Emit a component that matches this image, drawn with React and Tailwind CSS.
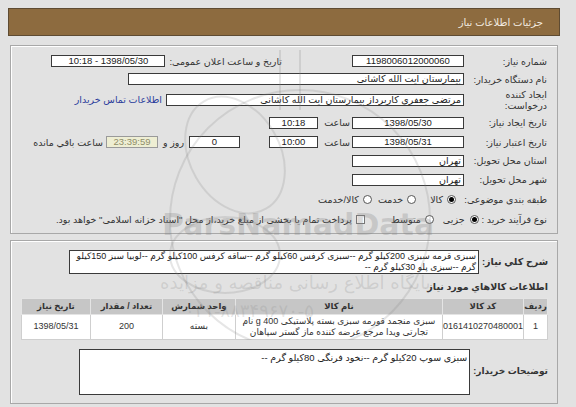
import React from 'react';

const FONT = "font-['Liberation_Sans','DejaVu_Sans',sans-serif]";

function Box({ className = '', children }) {
  return (
    <div className={`flex h-[12px] shrink-0 items-center overflow-hidden whitespace-nowrap border border-[#3a3a3a] bg-white px-[2px] text-[9.5px] leading-none text-[#222] ${className}`}>
      {children}
    </div>
  );
}

function Label({ className = '', children }) {
  return <div className={`shrink-0 whitespace-nowrap text-[9.5px] leading-[11px] text-[#333] ${className}`}>{children}</div>;
}

function Radio({ checked }) {
  return (
    <span className="grid h-[9px] w-[9px] shrink-0 place-items-center rounded-full border border-[#555] bg-white">
      {checked && <span className="h-[5px] w-[5px] rounded-full bg-black" />}
    </span>
  );
}

export default function App() {
  return (
    <div dir="rtl" className={`relative min-h-screen overflow-hidden bg-[#e2e2e2] pl-[8px] pr-[16px] pt-[8px] ${FONT}`}>
      {/* سربرگ */}
      <div className="flex h-[28px] items-center border border-[#5e4b32] bg-[#8d6b3f] pr-[16px] text-[10px] text-[#f3ece0]">
        جزئیات اطلاعات نیاز
      </div>

      {/* پنل اول */}
      <div className="mx-[2px] mt-[9px] border border-[#a8a8a8] pb-[4px] pr-[10px] pt-[6px] shadow-[inset_1px_1px_0_#fff]">
        {/* ردیف ۱ */}
        <div className="flex h-[18px] items-center">
          <Label className="w-[83px]">شماره نیاز:</Label>
          <Box className="w-[112px] justify-center">1198006012000060</Box>
          <Label className="mr-[70px]">تاریخ و ساعت اعلان عمومی:</Label>
          <Box className="mr-[4px] w-[114px] justify-center">1398/05/30 - 10:18</Box>
        </div>
        {/* ردیف ۲ */}
        <div className="flex h-[18px] items-center">
          <Label className="w-[83px]">نام دستگاه خریدار:</Label>
          <Box className="w-[336px]">بیمارستان آیت الله کاشانی</Box>
        </div>
        {/* ردیف ۳ */}
        <div className="flex h-[24px] items-center">
          <Label className="w-[83px]">
            ایجاد کننده
            <br />
            درخواست:
          </Label>
          <Box className="w-[298px]">مرتضی جعفری کاربرداز بیمارستان آیت الله کاشانی</Box>
          <a className="mr-[4px] whitespace-nowrap text-[9.5px] text-[#2c3e9c]">اطلاعات تماس خریدار</a>
        </div>
        {/* ردیف ۴ */}
        <div className="flex h-[21px] items-center">
          <Label className="w-[83px]">تاریخ ایجاد نیاز:</Label>
          <Box className="w-[112px] justify-center">1398/05/30</Box>
          <Label className="mr-[2px] w-[26px]">ساعت</Label>
          <Box className="mr-[6px] w-[49px] justify-center">10:18</Box>
        </div>
        {/* ردیف ۵ */}
        <div className="flex h-[18px] items-center">
          <Label className="w-[83px]">تاریخ اعتبار نیاز:</Label>
          <Box className="w-[112px] justify-center">1398/05/31</Box>
          <Label className="mr-[2px] w-[26px]">ساعت</Label>
          <Box className="mr-[6px] w-[49px] justify-center">10:00</Box>
          <Box className="mr-[29px] w-[51px] justify-center">0</Box>
          <Label className="mr-[5px]">روز و</Label>
          <div className="mr-[5px] flex h-[12px] w-[52px] items-center justify-center border border-[#9a9a9a] bg-[#eeeed3] text-[9.5px] text-[#8e8d68]">
            23:39:59
          </div>
          <Label className="mr-[3px]">ساعت باقي مانده</Label>
        </div>
        {/* ردیف ۶ */}
        <div className="flex h-[19px] items-center">
          <Label className="w-[83px]">استان محل تحویل:</Label>
          <Box className="w-[112px]">تهران</Box>
        </div>
        {/* ردیف ۷ */}
        <div className="flex h-[19px] items-center">
          <Label className="w-[83px]">شهر محل تحویل:</Label>
          <Box className="w-[112px]">تهران</Box>
        </div>
        {/* ردیف ۸ */}
        <div className="flex h-[20px] items-center">
          <Label className="w-[83px]">طبقه بندی موضوعی:</Label>
          <div className="mr-[8px] flex items-center gap-[4px]">
            <Radio checked />
            <Label>کالا</Label>
          </div>
          <div className="mr-[14px] flex items-center gap-[4px]">
            <Radio />
            <Label>خدمت</Label>
          </div>
          <div className="mr-[6px] flex items-center gap-[4px]">
            <Radio />
            <Label>کالا/خدمت</Label>
          </div>
        </div>
        {/* ردیف ۹ */}
        <div className="flex h-[20px] items-center">
          <Label>نوع فرآیند خرید :</Label>
          <div className="mr-[3px] flex items-center gap-[5px]">
            <Radio checked />
            <Label>جزیی</Label>
          </div>
          <div className="mr-[9px] flex items-center gap-[4px]">
            <Radio />
            <Label>متوسط</Label>
          </div>
          <div className="mr-[26px] flex items-center gap-[4px]">
            <span className="h-[9px] w-[9px] shrink-0 border border-[#777] bg-white" />
            <Label>پرداخت تمام یا بخشی از مبلغ خرید،از محل "اسناد خزانه اسلامی" خواهد بود.</Label>
          </div>
        </div>
      </div>

      {/* پنل دوم */}
      <div className="mx-[2px] mt-[6px] border border-[#a8a8a8] pb-[8px] pl-[9px] pr-[9px] pt-[9px] shadow-[inset_1px_1px_0_#fff]">
        <div className="flex items-center gap-[3px]">
          <div className="shrink-0 whitespace-nowrap text-[9.5px] font-bold text-[#333]">شرح کلي نياز:</div>
          <div className="h-[24px] w-[410px] shrink-0 overflow-hidden border border-[#3a3a3a] bg-white px-[2px] text-[9px] leading-[11px] text-[#222]">
            <div className="whitespace-nowrap">سبزی قرمه سبزی 200کیلو گرم --سبزی کرفس 60کیلو گرم --ساقه کرفس 100کیلو گرم --لوبیا سبز 150کیلو</div>
            <div className="whitespace-nowrap">گرم --سبزی پلو 30کیلو گرم --</div>
          </div>
        </div>

        <div className="mt-[6px] whitespace-nowrap text-[9.5px] font-bold leading-[13px] text-[#333]">اطلاعات کالاهاي مورد نياز</div>

        <table className="mt-[5px] w-[527px] border-collapse text-[8.5px] text-[#333]">
          <thead>
            <tr className="h-[16px] bg-[#c6c6c6]">
              <th className="w-[24px] border border-[#e4e4e4] font-bold">ردیف</th>
              <th className="w-[77px] border border-[#e4e4e4] font-bold">کد کالا</th>
              <th className="w-[207px] border border-[#e4e4e4] font-bold">نام کالا</th>
              <th className="w-[73px] border border-[#e4e4e4] font-bold">واحد شمارش</th>
              <th className="w-[72px] border border-[#e4e4e4] font-bold">تعداد / مقدار</th>
              <th className="border border-[#e4e4e4] font-bold">تاریخ نیاز</th>
            </tr>
          </thead>
          <tbody>
            <tr className="h-[25px] bg-white text-center text-[9px]">
              <td className="border border-[#cfcfcf]">1</td>
              <td className="border border-[#cfcfcf]">0161410270480001</td>
              <td className="whitespace-nowrap border border-[#cfcfcf] text-center leading-[11px]">
                سبزی منجمد قورمه سبزی بسته پلاستیکی 400 g نام
                <br />
                تجارتی ویدا مرجع عرضه کننده ماز گستر سپاهان
              </td>
              <td className="border border-[#cfcfcf]">بسته</td>
              <td className="border border-[#cfcfcf]">200</td>
              <td className="border border-[#cfcfcf]">1398/05/31</td>
            </tr>
          </tbody>
        </table>

        <div className="mt-[9px] flex items-center gap-[3px]">
          <div className="shrink-0 whitespace-nowrap text-[9px] font-bold text-[#333]">توضیحات خریدار:</div>
          <div className="h-[46px] w-[391px] shrink-0 border border-[#3a3a3a] bg-white px-[2px] pt-[2px] text-[9.5px] leading-[11px] text-[#222]">
            سبزی سوپ 20کیلو گرم --نخود فرنگی 80کیلو گرم --
          </div>
        </div>
      </div>

      {/* واترمارک */}
      <svg className="pointer-events-none absolute left-[140px] top-[40px]" width="320" height="300" viewBox="0 0 320 300" fill="none" stroke="rgba(130,130,130,0.2)" strokeWidth="2">
        <circle cx="160" cy="180" r="130" />
        <ellipse cx="95" cy="115" rx="45" ry="62" transform="rotate(-30 95 115)" />
        <ellipse cx="85" cy="215" rx="55" ry="38" />
        <path d="M140 10 v60 M160 10 v60" />
      </svg>
      <div className="pointer-events-none absolute left-[162px] top-[210px] text-[30px] font-bold leading-none text-[rgba(130,130,130,0.28)] font-['DejaVu_Sans',sans-serif]" dir="ltr">
        ParsNamadData
      </div>
      <div className="pointer-events-none absolute left-[160px] top-[274px] text-[18px] leading-none text-[rgba(130,130,130,0.22)] font-['DejaVu_Sans',sans-serif]">
        پایگاه اطلاع رسانی مناقصه و مزایده
      </div>
      <div className="pointer-events-none absolute left-[185px] top-[302px] text-[18px] leading-none text-[rgba(130,130,130,0.2)] font-['DejaVu_Sans',sans-serif]" dir="ltr">
        ۰۲۱-۸۸۳۴۹۶۷۰-۵
      </div>
    </div>
  );
}
